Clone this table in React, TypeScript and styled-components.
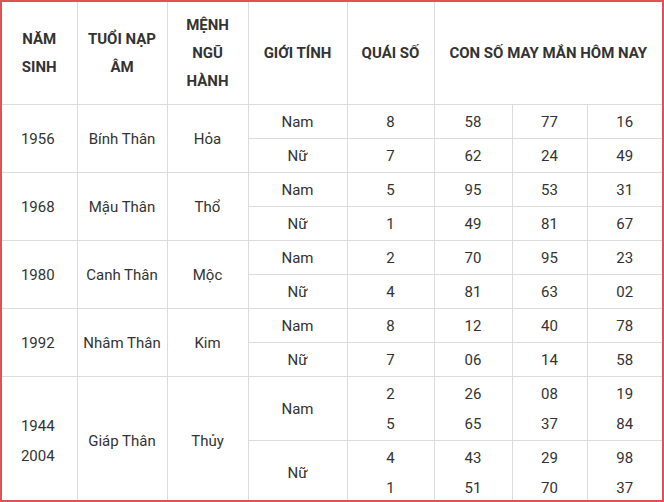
import React from "react";
import styled, { createGlobalStyle } from "styled-components";

const Global = createGlobalStyle`
  html, body { margin: 0; padding: 0; background: #fff; }
  body { font-family: Roboto, "Noto Sans", "Liberation Sans", sans-serif; color: #333; }
`;

const Frame = styled.div`
  width: 664px;
  height: 502px;
  box-sizing: border-box;
  border: 2px solid #dc5356;
  overflow: hidden;
  background: #fff;
`;

const Table = styled.table`
  width: 660px;
  table-layout: fixed;
  border-collapse: collapse;
  border-style: hidden;
  font-size: 15px;
`;

const Col = styled.col<{ $w: number }>`
  width: ${(p) => p.$w}px;
`;

const HeadCell = styled.th`
  border: 1px solid #dcdcdc;
  padding: 9px 8px;
  line-height: 28px;
  font-weight: 700;
  color: #333;
  text-align: center;
  vertical-align: middle;
  height: 84px;
`;

const Cell = styled.td`
  border: 1px solid #dcdcdc;
  padding: 2px 4px 1px;
  line-height: 30px;
  text-align: center;
  vertical-align: middle;
  color: #333;
`;

const YearCell = styled(Cell)`
  padding-right: 7px;
`;

type Gender = { label: string; nums: string[][] };
type Group = { years: string[]; tuoi: string; menh: string; rows: Gender[] };

const colWidths = [75, 90, 81, 99, 87, 78, 75, 75];

const groups: Group[] = [
  {
    years: ["1956"], tuoi: "Bính Thân", menh: "Hỏa",
    rows: [
      { label: "Nam", nums: [["8"], ["58"], ["77"], ["16"]] },
      { label: "Nữ", nums: [["7"], ["62"], ["24"], ["49"]] },
    ],
  },
  {
    years: ["1968"], tuoi: "Mậu Thân", menh: "Thổ",
    rows: [
      { label: "Nam", nums: [["5"], ["95"], ["53"], ["31"]] },
      { label: "Nữ", nums: [["1"], ["49"], ["81"], ["67"]] },
    ],
  },
  {
    years: ["1980"], tuoi: "Canh Thân", menh: "Mộc",
    rows: [
      { label: "Nam", nums: [["2"], ["70"], ["95"], ["23"]] },
      { label: "Nữ", nums: [["4"], ["81"], ["63"], ["02"]] },
    ],
  },
  {
    years: ["1992"], tuoi: "Nhâm Thân", menh: "Kim",
    rows: [
      { label: "Nam", nums: [["8"], ["12"], ["40"], ["78"]] },
      { label: "Nữ", nums: [["7"], ["06"], ["14"], ["58"]] },
    ],
  },
  {
    years: ["1944", "2004"], tuoi: "Giáp Thân", menh: "Thủy",
    rows: [
      { label: "Nam", nums: [["2", "5"], ["26", "65"], ["08", "37"], ["19", "84"]] },
      { label: "Nữ", nums: [["4", "1"], ["43", "51"], ["29", "70"], ["98", "37"]] },
    ],
  },
];

const Lines: React.FC<{ items: string[] }> = ({ items }) => (
  <>
    {items.map((t, i) => (
      <React.Fragment key={i}>
        {i > 0 && <br />}
        {t}
      </React.Fragment>
    ))}
  </>
);

export default function App() {
  return (
    <>
      <Global />
      <Frame>
        <Table>
          <colgroup>
            {colWidths.map((w, i) => (
              <Col key={i} $w={w} />
            ))}
          </colgroup>
          <thead>
            <tr>
              <HeadCell>NĂM SINH</HeadCell>
              <HeadCell>TUỔI NẠP ÂM</HeadCell>
              <HeadCell>MỆNH NGŨ HÀNH</HeadCell>
              <HeadCell>GIỚI TÍNH</HeadCell>
              <HeadCell>QUÁI SỐ</HeadCell>
              <HeadCell colSpan={3}>CON SỐ MAY MẮN HÔM NAY</HeadCell>
            </tr>
          </thead>
          <tbody>
            {groups.map((g, gi) =>
              g.rows.map((r, ri) => (
                <tr key={`${gi}-${ri}`}>
                  {ri === 0 && (
                    <>
                      <YearCell rowSpan={2}><Lines items={g.years} /></YearCell>
                      <Cell rowSpan={2}>{g.tuoi}</Cell>
                      <Cell rowSpan={2}>{g.menh}</Cell>
                    </>
                  )}
                  <Cell>{r.label}</Cell>
                  {r.nums.map((n, ni) => (
                    <Cell key={ni}><Lines items={n} /></Cell>
                  ))}
                </tr>
              ))
            )}
          </tbody>
        </Table>
      </Frame>
    </>
  );
}
